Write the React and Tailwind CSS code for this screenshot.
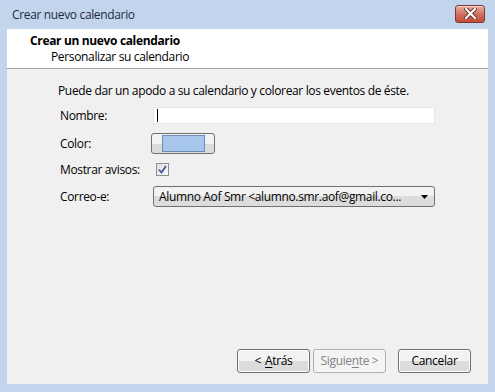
import { useState } from 'react'

const font = { fontFamily: '"Open Sans", "Noto Sans", sans-serif' }

function CloseButton() {
  return (
    <div className="mr-[3px] mt-[-2px] flex h-[18px] w-[30px] items-center justify-center rounded-[3px] border border-[#7a3a30] bg-gradient-to-b from-[#e8ada2] via-[#d27262] to-[#c24a36] shadow-[inset_0_1px_0_rgba(255,255,255,0.5)]">
      <svg width="13" height="11" viewBox="0 0 13 11">
        <path d="M2 1 L11 10 M11 1 L2 10" stroke="#5a2a24" strokeWidth="4" strokeLinecap="square" />
        <path d="M2 1 L11 10 M11 1 L2 10" stroke="#ffffff" strokeWidth="2.2" strokeLinecap="square" />
      </svg>
    </div>
  )
}

function WinButton({ children, disabled, className = '' }) {
  return (
    <button
      type="button"
      disabled={disabled}
      className={
        'flex h-[24px] w-[73px] items-center justify-center rounded-[3px] border text-[12px] ' +
        (disabled
          ? 'border-[#adb2b5] bg-[#f4f4f4] text-[#838383] '
          : 'border-[#707070] bg-gradient-to-b from-[#f2f2f2] from-50% to-[#dcdcdc] to-50% text-black shadow-[inset_0_0_0_1px_#fcfcfc] ') +
        className
      }
    >
      {children}
    </button>
  )
}

function Row({ label, children, className = '' }) {
  return (
    <div className={'flex h-[21px] items-center ' + className}>
      <span className="w-[91px] shrink-0">{label}</span>
      {children}
    </div>
  )
}

export default function App() {
  const [notify, setNotify] = useState(true)

  return (
    <div style={font} className="flex h-[392px] w-[495px] flex-col bg-[#c2d5ed] px-[7px] pb-[8px] text-[12px] tracking-[-0.35px] text-black">
      <div className="flex h-[29px] shrink-0 items-center justify-between">
        <span className="ml-[5px] text-[12px] text-[#1e2a3a]">Crear nuevo calendario</span>
        <CloseButton />
      </div>

      <div className="flex flex-1 flex-col bg-[#f0f0f0]">
        <div className="h-[40px] shrink-0 border-b border-[#a0a0a0] bg-white pt-[4px]">
          <div className="ml-[23px] h-[16px] leading-[16px] font-bold">Crear un nuevo calendario</div>
          <div className="ml-[44px] h-[16px] leading-[16px]">Personalizar su calendario</div>
        </div>

        <div className="flex-1 pl-[51px] pt-[14px]">
          <p className="h-[16px] leading-[16px]">Puede dar un apodo a su calendario y colorear los eventos de éste.</p>
          <div className="pl-[2px]">
            <Row label="Nombre:" className="mt-[6px]">
              <div className="ml-[2px] flex h-[17px] w-[282px] items-center border border-[#e2e6ea] bg-white pl-[3px]">
                <span className="h-[13px] w-[1px] bg-black" />
              </div>
            </Row>
            <Row label="Color:" className="mt-[7px]">
              <div className="flex h-[21px] w-[64px] items-center justify-center rounded-[3px] border border-[#707070] bg-gradient-to-b from-[#f2f2f2] from-50% to-[#dcdcdc] to-50%">
                <span className="h-[17px] w-[43px] border border-[#6b8db5] bg-[#a6c6ec]" />
              </div>
            </Row>
            <Row label="Mostrar avisos:" className="mt-[5px]">
              <button
                type="button"
                onClick={() => setNotify(!notify)}
                className="ml-[5px] flex h-[13px] w-[13px] items-center justify-center border border-[#8e8f8f] bg-gradient-to-br from-[#dcdcdc] to-[#fbfbfb]"
              >
                {notify && (
                  <svg width="9" height="9" viewBox="0 0 9 9">
                    <path d="M1 4.5 L3.5 7.5 L8 1" fill="none" stroke="#3d5aa0" strokeWidth="1.8" />
                  </svg>
                )}
              </button>
            </Row>
            <Row label="Correo-e:" className="mt-[6px]">
              <div className="ml-[2px] flex h-[21px] w-[282px] items-center justify-between rounded-[3px] border border-[#707070] bg-gradient-to-b from-[#f2f2f2] from-50% to-[#dcdcdc] to-50% pl-[5px] pr-[6px]">
                <span>Alumno Aof Smr &lt;alumno.smr.aof@gmail.co...</span>
                <svg width="7" height="4" viewBox="0 0 7 4">
                  <path d="M0 0 L7 0 L3.5 4 Z" fill="#000" />
                </svg>
              </div>
            </Row>
          </div>
        </div>

        <div className="flex shrink-0 items-center justify-end pb-[11px] pr-[17px]">
          <WinButton>
            <span>&lt;</span>
            <span className="ml-[4px] underline underline-offset-2">A</span>trás
          </WinButton>
          <WinButton disabled className="ml-[3px]">
            Siguie<span className="underline underline-offset-2">n</span>te &gt;
          </WinButton>
          <WinButton className="ml-[12px]">Cancelar</WinButton>
        </div>
      </div>
    </div>
  )
}
